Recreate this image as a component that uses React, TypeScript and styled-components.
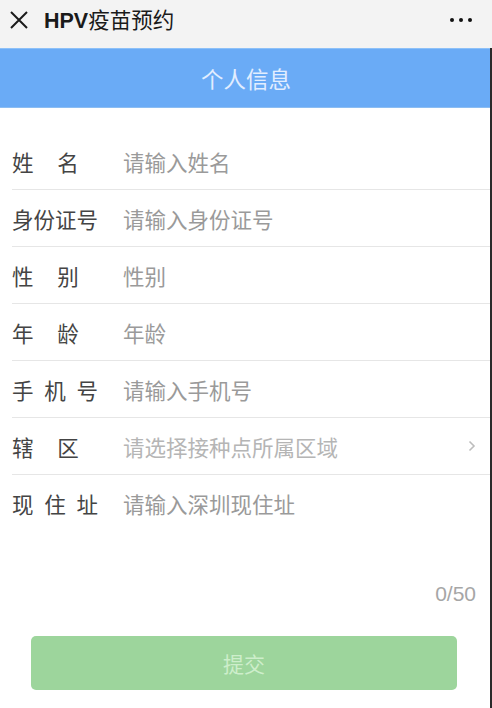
import * as React from 'react';
import styled, { createGlobalStyle } from 'styled-components';

const GlobalStyle = createGlobalStyle`
  html, body {
    margin: 0;
    padding: 0;
    background: #ffffff;
  }
  body {
    font-family: "Noto Sans CJK SC", "Noto Sans", sans-serif;
  }
`;

const Page = styled.div`
  width: 492px;
  height: 708px;
  display: flex;
  flex-direction: column;
  background: #ffffff;
  overflow: hidden;
`;

const TopBar = styled.div`
  height: 48px;
  flex-shrink: 0;
  display: flex;
  align-items: center;
  padding: 0 14px 0 8px;
  background: #f3f3f3;
  box-sizing: border-box;
`;

const CloseButton = styled.div`
  width: 22px;
  height: 22px;
  display: flex;
  align-items: center;
  justify-content: center;
  margin-top: -8px;
`;

const Title = styled.div`
  margin-left: 14px;
  margin-top: -8px;
  font-size: 21.5px;
  line-height: 26px;
  color: #1a1a1a;
  font-weight: 400;
  flex: 1;
`;

const Latin = styled.span`
  font-family: "Liberation Sans", sans-serif;
  font-weight: 700;
`;

const MoreDots = styled.div`
  display: flex;
  gap: 5px;
  margin-top: -8px;
  margin-right: 6px;
`;

const Dot = styled.span`
  width: 4px;
  height: 4px;
  border-radius: 50%;
  background: #111;
`;

const Body = styled.div`
  flex: 1;
  display: flex;
  flex-direction: column;
  border-right: 2px solid #2a2a2a;
`;

const SectionBar = styled.div`
  height: 60px;
  flex-shrink: 0;
  display: flex;
  align-items: center;
  justify-content: center;
  background: #6aabf6;
  border-top: 1px solid #8cc0f8;
  border-bottom: 1px solid #8cbdf2;
  box-sizing: border-box;
  color: #e2eeff;
  font-size: 22.5px;
  padding-left: 2px;
`;

const Form = styled.div`
  display: flex;
  flex-direction: column;
  margin-top: 25px;
  padding-left: 12px;
`;

const Row = styled.div<{ $last?: boolean }>`
  height: 57px;
  display: flex;
  align-items: center;
  border-bottom: ${p => (p.$last ? 'none' : '1px solid #e6e6e6')};
  box-sizing: border-box;
  padding-right: 14px;
`;

const Label = styled.div<{ $spacing: string }>`
  width: 111px;
  font-size: 21.5px;
  color: #444444;
  letter-spacing: ${p => p.$spacing};
  white-space: nowrap;
`;

const Placeholder = styled.div<{ $muted?: boolean }>`
  flex: 1;
  font-size: 21.5px;
  color: ${p => (p.$muted ? '#b5b5b5' : '#9a9a9a')};
`;

const Counter = styled.div`
  margin-top: 50px;
  padding-right: 14px;
  text-align: right;
  font-family: "Liberation Sans", sans-serif;
  font-size: 21px;
  color: #a6a6a6;
`;

const SubmitButton = styled.div`
  margin: 30px 33px 0 31px;
  height: 54px;
  border-radius: 5px;
  background: #9dd59c;
  display: flex;
  align-items: center;
  justify-content: center;
  color: #cdeecb;
  font-size: 21px;
`;

const fields: { label: string; placeholder: string; muted?: boolean; arrow?: boolean }[] = [
  { label: '姓名', placeholder: '请输入姓名' },
  { label: '身份证号', placeholder: '请输入身份证号' },
  { label: '性别', placeholder: '性别' },
  { label: '年龄', placeholder: '年龄' },
  { label: '手机号', placeholder: '请输入手机号' },
  { label: '辖区', placeholder: '请选择接种点所属区域', muted: true, arrow: true },
  { label: '现住址', placeholder: '请输入深圳现住址' },
];

function labelSpacing(label: string) {
  if (label.length === 2) return '1.1em';
  if (label.length === 3) return '0.5em';
  return '0';
}

export default function App() {
  return (
    <Page>
      <GlobalStyle />
      <TopBar>
        <CloseButton>
          <svg width="20" height="20" viewBox="0 0 20 20">
            <path d="M2 2 L18 18 M18 2 L2 18" stroke="#1a1a1a" strokeWidth="2" fill="none" />
          </svg>
        </CloseButton>
        <Title>
          <Latin>HPV</Latin>疫苗预约
        </Title>
        <MoreDots>
          <Dot />
          <Dot />
          <Dot />
        </MoreDots>
      </TopBar>
      <Body>
        <SectionBar>个人信息</SectionBar>
        <Form>
          {fields.map((f, i) => (
            <Row key={f.label} $last={i === fields.length - 1}>
              <Label $spacing={labelSpacing(f.label)}>{f.label}</Label>
              <Placeholder $muted={f.muted}>{f.placeholder}</Placeholder>
              {f.arrow && (
                <svg width="8" height="12" viewBox="0 0 8 12">
                  <path d="M1.5 1.5 L6 6 L1.5 10.5" stroke="#bdbdbd" strokeWidth="1.6" fill="none" />
                </svg>
              )}
            </Row>
          ))}
        </Form>
        <Counter>0/50</Counter>
        <SubmitButton>提交</SubmitButton>
      </Body>
    </Page>
  );
}
